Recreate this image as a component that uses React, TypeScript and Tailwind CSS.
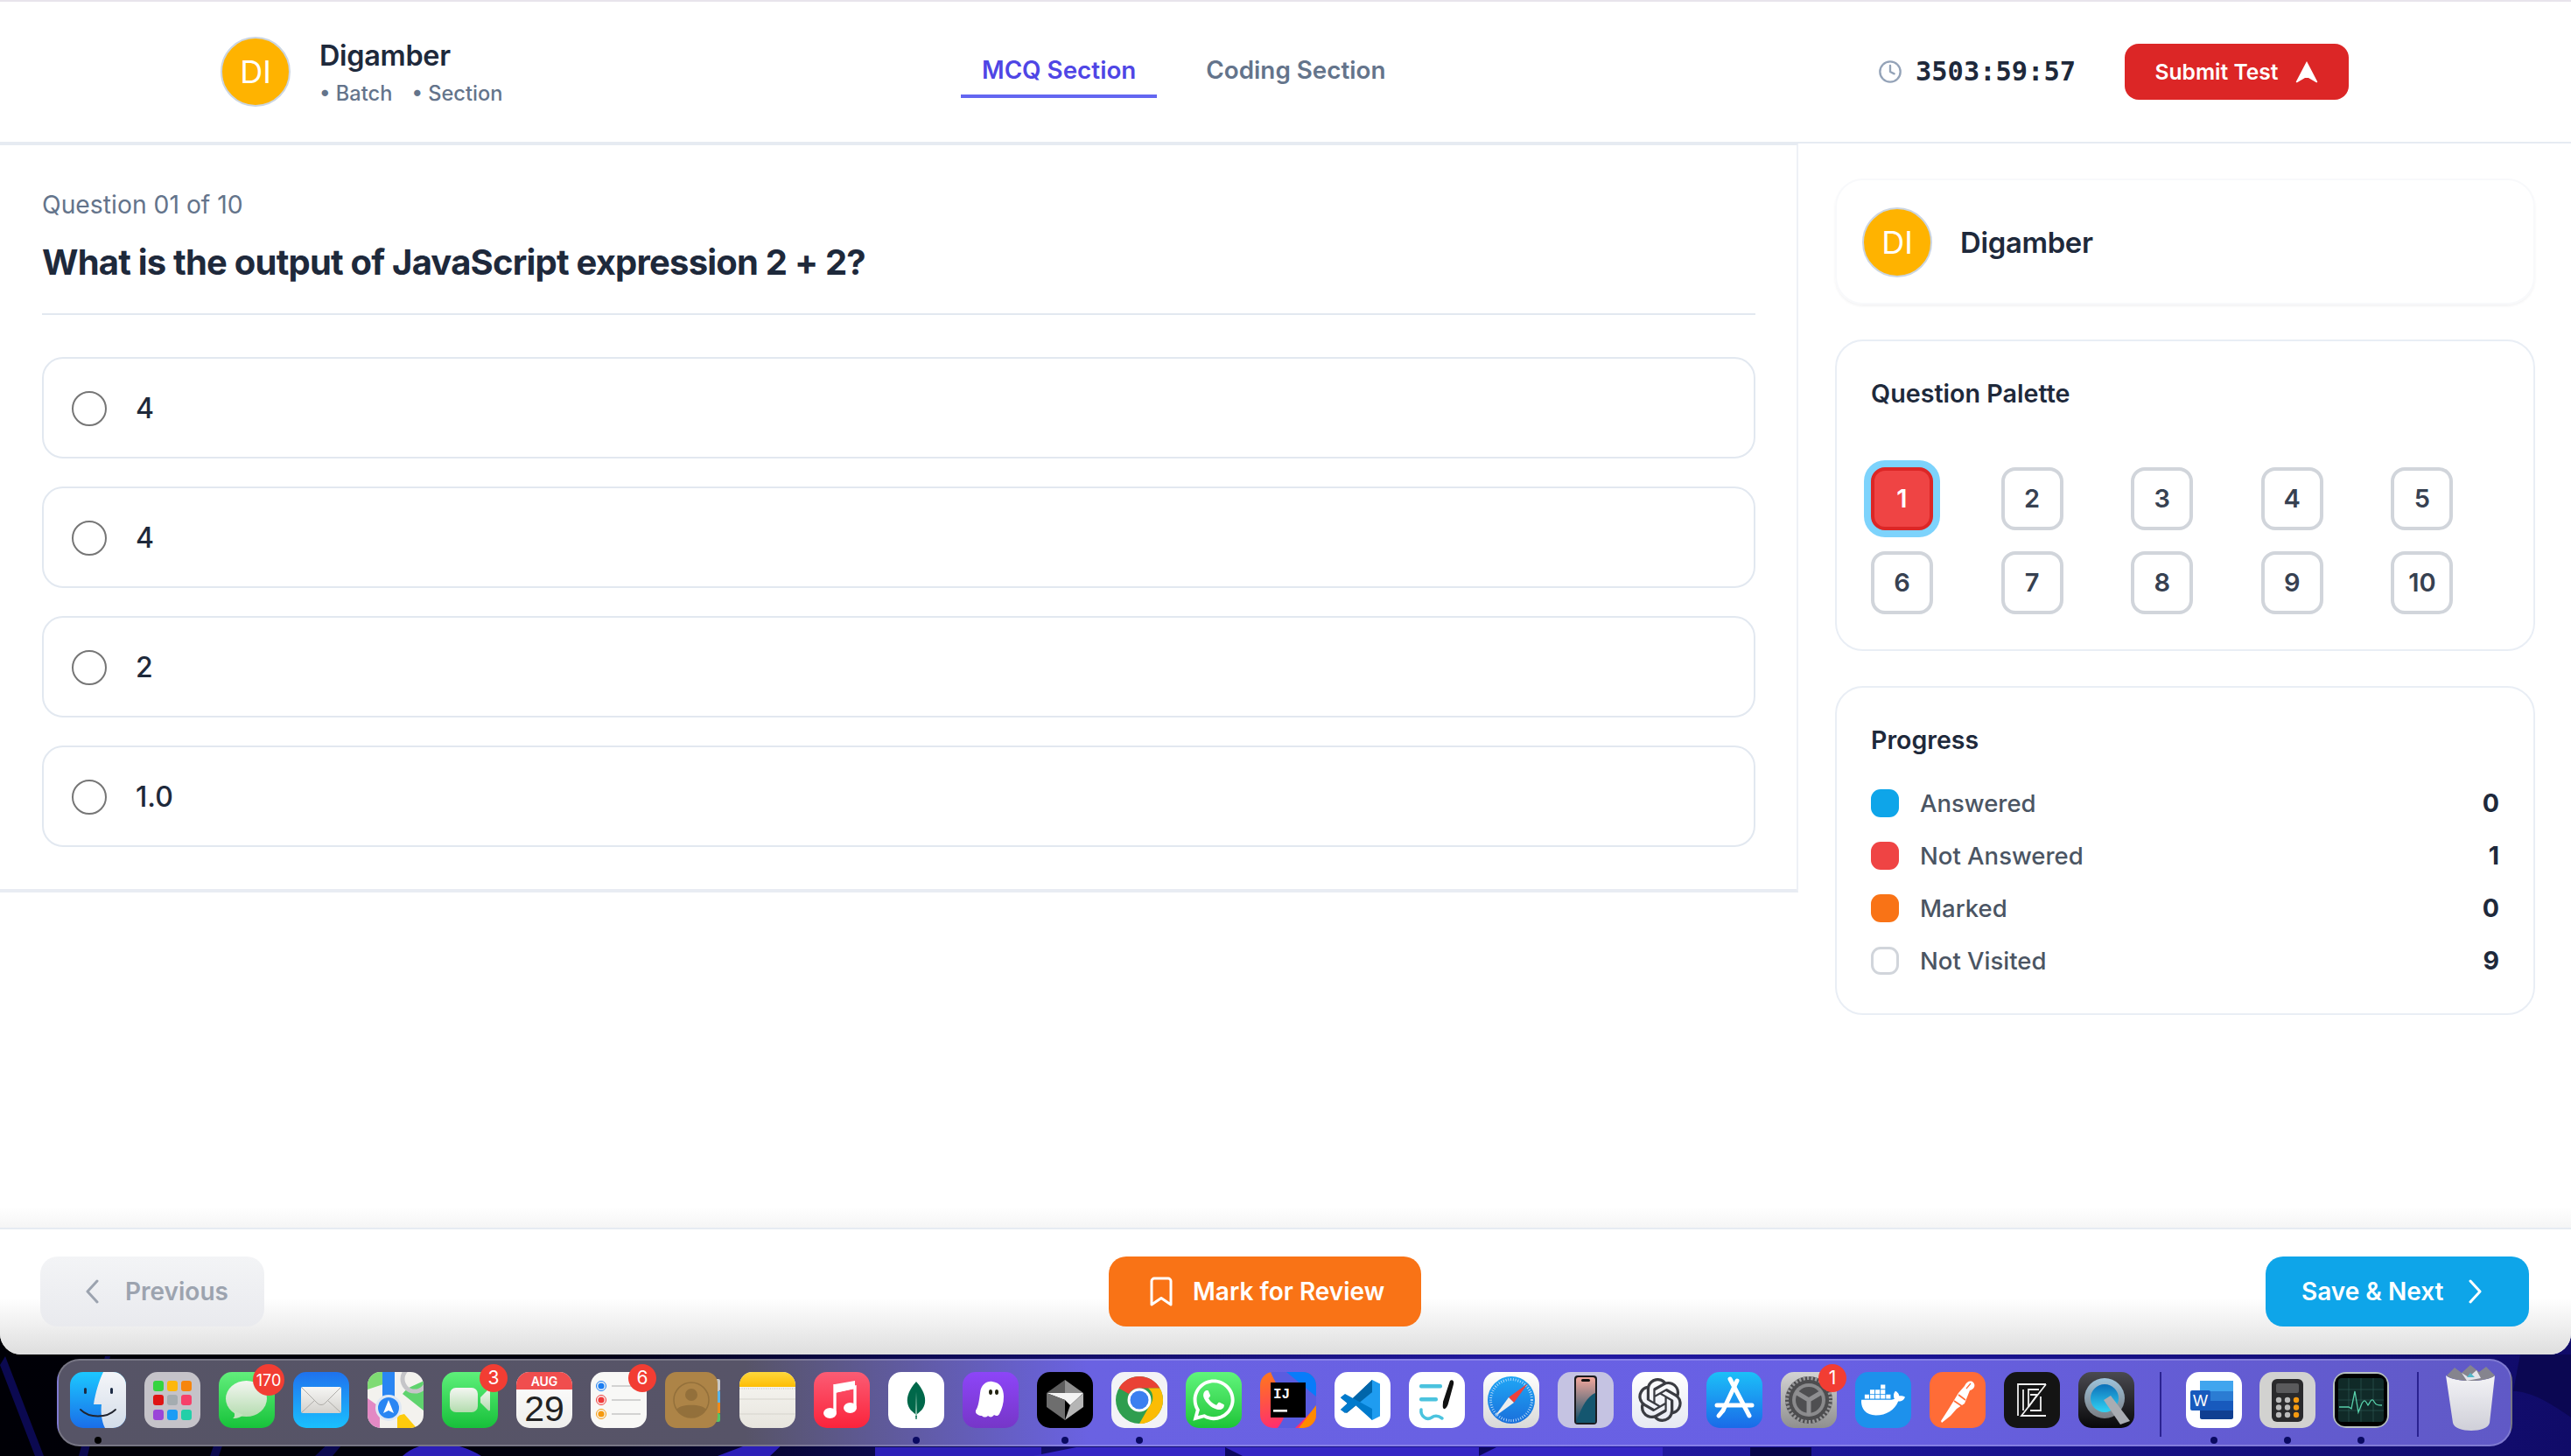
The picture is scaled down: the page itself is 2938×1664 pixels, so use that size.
import { ReactNode } from 'react'
import { Clock } from 'lucide-react'
import { FaWhatsapp, FaDocker } from 'react-icons/fa'
import { SiOpenai } from 'react-icons/si'

const options = ['4', '4', '2', '1.0']
const palette = [1, 2, 3, 4, 5, 6, 7, 8, 9, 10]
const progress = [
  { label: 'Answered', value: 0, swatch: 'bg-[#0ea5e9]' },
  { label: 'Not Answered', value: 1, swatch: 'bg-[#ef4444]' },
  { label: 'Marked', value: 0, swatch: 'bg-[#f97316]' },
  { label: 'Not Visited', value: 9, swatch: 'bg-white border-[3px] border-[#d1d5db]' },
]

function Avatar() {
  return (
    <div className="w-20 h-20 shrink-0 rounded-full bg-[#ffb300] border-2 border-[#cbd5e1] flex items-center justify-center text-white text-[36px] leading-none">
      DI
    </div>
  )
}

function Chevron({ dir }: { dir: 'left' | 'right' }) {
  return (
    <svg width="16" height="28" viewBox="0 0 16 28" fill="none" stroke="currentColor" strokeWidth="3" strokeLinecap="round" strokeLinejoin="round">
      <polyline points={dir === 'left' ? '14,2 3,14 14,26' : '2,2 13,14 2,26'} />
    </svg>
  )
}

/* Dock tiles: every icon is drawn on a 64 x 64 grid */
function Svg({ children }: { children: ReactNode }) {
  return (
    <svg width="64" height="64" viewBox="0 0 64 64" className="block">
      {children}
    </svg>
  )
}

function Grad({ id, from, to, x2 = 0, y2 = 1 }: { id: string; from: string; to: string; x2?: number; y2?: number }) {
  return (
    <defs>
      <linearGradient id={id} x1="0" y1="0" x2={x2} y2={y2}>
        <stop offset="0" stopColor={from} />
        <stop offset="1" stopColor={to} />
      </linearGradient>
    </defs>
  )
}

const Finder = () => (
  <Svg>
    <Grad id="f1" from="#1cc8ff" to="#1a6ee8" />
    <Grad id="f2" from="#f4f5f8" to="#d3dde9" />
    <rect width="64" height="64" fill="url(#f1)" />
    <path d="M38 0C33 10 29 24 27 37H36C35 46 36 56 40 64H64V0Z" fill="url(#f2)" />
    <rect x="16" y="18" width="3" height="7" rx="1.5" fill="#1d2b44" />
    <rect x="46" y="18" width="3" height="7" rx="1.5" fill="#1d2b44" />
    <path d="M12 43C22 53 42 53 52 43" fill="none" stroke="#20242e" strokeWidth="1.8" strokeLinecap="round" />
  </Svg>
)

const launchColors = ['#35d43f', '#fdb70c', '#f6850d', '#df1414', '#a4acb0', '#f6406a', '#9a45d8', '#1a9cf5', '#22cfa8']
const Launchpad = () => (
  <div className="w-16 h-16 bg-[#c5c3c9] grid grid-cols-[repeat(3,12px)] gap-x-[4px] gap-y-[4.5px] content-center justify-center">
    {launchColors.map((c) => (
      <div key={c} className="h-[12px] rounded-[3px]" style={{ background: c }} />
    ))}
  </div>
)

const Messages = () => (
  <Svg>
    <Grad id="m1" from="#62ee7c" to="#17c33a" />
    <Grad id="m2" from="#f3f6f1" to="#b5dcb0" />
    <rect width="64" height="64" fill="url(#m1)" />
    <ellipse cx="31.5" cy="30.5" rx="23.5" ry="20.5" fill="url(#m2)" />
    <path d="M17 44C19 49 18 52 16 53C20 53.5 25 52 28 49Z" fill="#c4e3bf" />
  </Svg>
)

const Mail = () => (
  <Svg>
    <Grad id="ma" from="#1f72ee" to="#1ac0fe" />
    <Grad id="mb" from="#f6f6f4" to="#d3d1cd" />
    <rect width="64" height="64" fill="url(#ma)" />
    <rect x="9" y="17" width="46" height="30" rx="2" fill="url(#mb)" />
    <path d="M10 18L28 36C30 38 34 38 36 36L54 18M10 46L25 32M54 46L39 32" fill="none" stroke="#aeaca8" strokeWidth="1" />
  </Svg>
)

const Maps = () => (
  <Svg>
    <rect width="64" height="64" fill="#f3f2ee" />
    <path d="M0 0H18V14L0 20Z" fill="#7fdb73" />
    <path d="M40 25L64 44V10C58 14 46 16 40 25Z" fill="#5fd36e" />
    <path d="M0 30L14 40V64H0Z" fill="#e389c4" />
    <path d="M34 64V50L42 48L56 64Z" fill="#fdcb0d" />
    <rect x="17" y="0" width="14" height="30" fill="#2a86f3" />
    <circle cx="54" cy="8" r="14" fill="none" stroke="#c5c5c8" strokeWidth="5" />
    <circle cx="24" cy="41" r="15" fill="#dfe8f4" />
    <circle cx="24" cy="41" r="12" fill="#2a86f3" />
    <path d="M24 32L30 47L24 44L18 47Z" fill="#fff" />
  </Svg>
)

const FaceTime = () => (
  <Svg>
    <Grad id="ft" from="#5ef07a" to="#17c03a" />
    <Grad id="ft2" from="#f4f6f2" to="#b3dcae" />
    <rect width="64" height="64" fill="url(#ft)" />
    <rect x="9" y="18" width="32" height="28" rx="7" fill="url(#ft2)" />
    <path d="M44 29L53 20C54 19 55 20 55 21V43C55 44 54 45 53 44L44 35Z" fill="url(#ft2)" />
  </Svg>
)

const Calendar = () => (
  <Svg>
    <Grad id="ca" from="#ffffff" to="#eeeeec" />
    <rect width="64" height="64" fill="url(#ca)" />
    <rect width="64" height="20" fill="#f04e4e" />
    <text x="32" y="16" textAnchor="middle" fontFamily="Inter, sans-serif" fontSize="14" fontWeight="600" fill="#fff">AUG</text>
    <text x="32" y="56" textAnchor="middle" fontFamily="'Liberation Sans', sans-serif" fontSize="41" fill="#222">29</text>
  </Svg>
)

const Reminders = () => (
  <Svg>
    <rect width="64" height="64" fill="#f8f8f6" />
    {[
      ['16', '#1c7ef2'],
      ['32', '#f03b3b'],
      ['48', '#f59a10'],
    ].map(([y, c]) => (
      <g key={y}>
        <circle cx="12" cy={y} r="5.5" fill="none" stroke={c} strokeWidth="1" />
        <circle cx="12" cy={y} r="3.6" fill={c} />
        <rect x="24" y={Number(y) - 0.8} width="33" height="1.6" fill="#c9c9c9" />
      </g>
    ))}
  </Svg>
)

const Contacts = () => (
  <Svg>
    <rect x="56" y="8" width="7" height="14" rx="2" fill="#c8c8c6" />
    <rect x="56" y="22" width="7" height="13" fill="#58b4ea" />
    <rect x="56" y="35" width="7" height="12" fill="#ee8a1c" />
    <rect x="56" y="47" width="7" height="10" rx="2" fill="#55c463" />
    <rect width="60" height="64" rx="13" fill="#ad8447" />
    <circle cx="30" cy="32" r="20" fill="none" stroke="#93703b" strokeWidth="1.5" />
    <circle cx="30" cy="26" r="7" fill="#93703b" />
    <path d="M13 43C17 36 43 36 47 43C43 49 37 52 30 52C23 52 17 49 13 43Z" fill="#93703b" />
  </Svg>
)

const Notes = () => (
  <Svg>
    <Grad id="no" from="#f8f7f3" to="#e7e5de" />
    <Grad id="no2" from="#ffd83c" to="#fdbd04" />
    <rect width="64" height="64" fill="url(#no)" />
    <rect width="64" height="17" fill="url(#no2)" />
    <line x1="0" y1="19" x2="64" y2="19" stroke="#bbb" strokeWidth="1" strokeDasharray="1 1.5" />
    <line x1="0" y1="31" x2="64" y2="31" stroke="#d5d3cc" strokeWidth="1" />
    <line x1="0" y1="48" x2="64" y2="48" stroke="#d5d3cc" strokeWidth="1" />
  </Svg>
)

const Music = () => (
  <Svg>
    <Grad id="mu" from="#fb5c74" to="#fb233b" />
    <rect width="64" height="64" fill="url(#mu)" />
    <path d="M24 22L47 17V40" fill="none" stroke="#fff" strokeWidth="3.4" />
    <path d="M24 14L47 10V19L24 24Z" fill="#fff" />
    <path d="M24 14V46" stroke="#fff" strokeWidth="3.4" />
    <ellipse cx="18.5" cy="47" rx="7.5" ry="6" fill="#fff" />
    <ellipse cx="41.5" cy="41" rx="7.5" ry="6" fill="#fff" />
  </Svg>
)

const Mongo = () => (
  <Svg>
    <rect width="64" height="64" fill="#fff" />
    <path d="M32 11C40 20 43 28 42 35C41 42 36 46 33 48L32.6 54H31.4L31 48C28 46 23 42 22 35C21 28 24 20 32 11Z" fill="#00684a" />
    <path d="M32 22L32.8 50H31.2Z" fill="#b9dccb" />
  </Svg>
)

const Ghost = () => (
  <Svg>
    <Grad id="gh" from="#8d45f8" to="#7636c8" />
    <rect width="64" height="64" fill="url(#gh)" />
    <path d="M15 44C18 40 19 32 20 24C21 14 28 10 34 11C43 12 47 19 47 28C47 36 45 42 42 48C40 51 38 50 36 49C34 52 31 52 29 50C27 52 24 52 22 50C19 50 14 48 15 44Z" fill="#fff" />
    <ellipse cx="32" cy="23" rx="2" ry="3" fill="#221" />
    <ellipse cx="39" cy="23" rx="2" ry="3" fill="#221" />
  </Svg>
)

const Crystal = () => (
  <Svg>
    <rect width="64" height="64" fill="#000" />
    <path d="M32 9L53 24L32 30Z" fill="#8f8f8f" />
    <path d="M32 9L11 24L32 30Z" fill="#5c5c5c" />
    <path d="M11 24L53 24L38 38L32 32Z" fill="#f3f3f3" />
    <path d="M53 24V40L32 55L38 38Z" fill="#b5b5b5" />
    <path d="M11 24V40L32 55L32 32Z" fill="#6e6e6e" />
  </Svg>
)

const Chrome = () => (
  <Svg>
    <rect width="64" height="64" fill="#f3f3f6" />
    <circle cx="32" cy="32" r="27" fill="#2f9e4f" />
    <path d="M32 5A27 27 0 0 1 55.4 18.5H32A13.5 13.5 0 0 0 20 25L8.6 18.5A27 27 0 0 1 32 5Z" fill="#e94235" />
    <path d="M55.4 18.5A27 27 0 0 1 32 59L44 38A13.5 13.5 0 0 0 42 18.5Z" fill="#fbbc04" />
    <circle cx="32" cy="32" r="13.5" fill="#fff" />
    <circle cx="32" cy="32" r="10.5" fill="#3b7ff0" />
  </Svg>
)

const WhatsApp = () => (
  <div className="w-16 h-16 bg-gradient-to-b from-[#5ff57b] to-[#1ac536] flex items-center justify-center text-white">
    <FaWhatsapp size={54} />
  </div>
)

const Idea = () => (
  <Svg>
    <Grad id="ij" from="#ff7a1a" to="#ff2d6f" x2={0.3} />
    <rect width="64" height="64" fill="url(#ij)" />
    <path d="M12 0H64V40L40 64H20C40 40 20 20 12 0Z" fill="#5a5ce0" />
    <path d="M30 0H64V28Z" fill="#087cfa" />
    <path d="M44 64L64 38V64Z" fill="#ff8a00" />
    <rect x="12" y="12" width="40" height="40" fill="#000" />
    <text x="15" y="30" fontFamily="'Liberation Mono', monospace" fontSize="16" fontWeight="700" fill="#fff">IJ</text>
    <rect x="15" y="43" width="16" height="2.6" fill="#fff" />
  </Svg>
)

const VsCode = () => (
  <Svg>
    <rect width="64" height="64" fill="#fff" />
    <path d="M43 9L52 13.5V50.5L43 55L24 34Z" fill="#1f9cf0" />
    <path d="M43 9L18 33L10 27L7 29.5L15 36L43 23Z" fill="#0065a9" />
    <path d="M7 43L43 9V23L14 47Z" fill="#0065a9" />
    <path d="M7 29L12 25L43 42V55L24 38L12 47L7 43L15 36Z" fill="#007acc" />
  </Svg>
)

const Freeform = () => (
  <Svg>
    <rect width="64" height="64" fill="#fff" />
    <rect x="12" y="14" width="26" height="4.5" rx="2" fill="#4bc3de" />
    <rect x="12" y="29" width="21" height="4.5" rx="2" fill="#4bc3de" />
    <path d="M14 43C13 50 20 56 26 52C30 49 34 50 38 53" fill="none" stroke="#4bc3de" strokeWidth="3.5" strokeLinecap="round" />
    <path d="M47 10C50 8 52 11 51 14L45 36C44 40 41 43 40 42C38 41 39 37 39 34Z" fill="#111" />
  </Svg>
)

const Safari = () => (
  <Svg>
    <Grad id="sa" from="#fff" to="#d8d8d8" />
    <Grad id="sb" from="#1fa6f5" to="#1a6fdb" />
    <rect width="64" height="64" fill="url(#sa)" />
    <circle cx="32" cy="32" r="27" fill="url(#sb)" />
    <circle cx="32" cy="32" r="23.5" fill="none" stroke="#cfe6fa" strokeWidth="3" strokeDasharray="0.8 2" />
    <path d="M51 13L35 35L29 29Z" fill="#f0413b" />
    <path d="M13 51L29 29L35 35Z" fill="#eeeeee" />
  </Svg>
)

const Mirroring = () => (
  <Svg>
    <Grad id="ip" from="#f4a79c" to="#0d4d68" />
    <rect width="64" height="64" fill="#c5c3e2" />
    <rect x="19" y="4" width="26" height="56" rx="4" fill="#1b1b1f" />
    <rect x="21" y="6" width="22" height="52" rx="3" fill="url(#ip)" />
    <path d="M43 24C34 28 28 38 21 58H43Z" fill="#14566f" />
    <rect x="27" y="8" width="10" height="3" rx="1.5" fill="#111" />
  </Svg>
)

const ChatGpt = () => (
  <div className="w-16 h-16 bg-gradient-to-b from-white to-[#e6e9f2] flex items-center justify-center text-[#3a3c42]">
    <SiOpenai size={50} />
  </div>
)

const AppStore = () => (
  <Svg>
    <Grad id="as" from="#1cc0f8" to="#1a6ae8" />
    <rect width="64" height="64" fill="url(#as)" />
    <g stroke="#fff" strokeWidth="5" strokeLinecap="round" fill="none">
      <path d="M35 10L19 44" />
      <path d="M27 8L49 50" />
      <path d="M12 38H52" />
      <path d="M14 50L19 44" />
    </g>
  </Svg>
)

const Settings = () => (
  <Svg>
    <Grad id="se" from="#d3d3d3" to="#8f8f8f" />
    <rect width="64" height="64" fill="url(#se)" />
    <circle cx="32" cy="32" r="27" fill="#4d4d4f" />
    <circle cx="32" cy="32" r="25" fill="none" stroke="#98989a" strokeWidth="4" strokeDasharray="2.4 2.2" />
    <circle cx="32" cy="32" r="19" fill="#8a8a8c" />
    <circle cx="32" cy="32" r="15" fill="#4f4f51" />
    <path d="M32 32V49M32 32L17 23M32 32L47 23" stroke="#8f8f91" strokeWidth="5" />
  </Svg>
)

const Docker = () => (
  <div className="w-16 h-16 bg-[#1d91ec] flex items-center justify-center text-white">
    <FaDocker size={50} />
  </div>
)

const Postman = () => (
  <Svg>
    <rect width="64" height="64" fill="#ff6c37" />
    <path d="M13 56L22 42L33 24L40 16C42 11 47 9 50 12C53 15 51 20 46 21L40 36L31 42L24 50L14 58Z" fill="#fff" />
    <path d="M28 33L37 39M33 26L41 32" stroke="#ff6c37" strokeWidth="1.6" />
    <path d="M42 19L47 13" stroke="#ff6c37" strokeWidth="1.2" />
  </Svg>
)

const Zed = () => (
  <Svg>
    <rect width="64" height="64" fill="#141414" />
    <g fill="none" stroke="#eee" strokeWidth="1.8">
      <path d="M48 14H16V50" />
      <path d="M48 14L20 50H48" />
      <path d="M22 20V44" />
      <path d="M40 20H28V40" />
      <path d="M42 28V44H30" />
      <path d="M30 26H38L28 40" />
    </g>
  </Svg>
)

const QuickTime = () => (
  <Svg>
    <Grad id="qt" from="#4a4a50" to="#08080a" />
    <Grad id="qb" from="#0d6fb8" to="#31d4f5" />
    <Grad id="qc" from="#9ec4dc" to="#7a7d82" />
    <rect width="64" height="64" fill="url(#qt)" />
    <circle cx="30" cy="30" r="23" fill="url(#qc)" />
    <circle cx="30" cy="30" r="16" fill="url(#qb)" />
    <path d="M29 32L37 27L59 56L48 60Z" fill="#a9acb2" />
  </Svg>
)

const Word = () => (
  <Svg>
    <rect width="64" height="64" fill="#fff" />
    <rect x="16" y="10" width="38" height="12" fill="#41a5ee" />
    <rect x="16" y="22" width="38" height="11" fill="#2b7cd3" />
    <rect x="16" y="33" width="38" height="11" fill="#185abd" />
    <path d="M16 44H54V52C54 53 53 54 52 54H18C17 54 16 53 16 52Z" fill="#103f91" />
    <rect x="5" y="21" width="23" height="23" rx="2" fill="#185abd" />
    <text x="16.5" y="39" textAnchor="middle" fontFamily="'Liberation Sans', sans-serif" fontSize="18" fill="#fff">W</text>
  </Svg>
)

const calcKeys = ['#bbb', '#bbb', '#f59a10', '#bbb', '#bbb', '#f59a10', '#bbb', '#bbb', '#f59a10']
const Calculator = () => (
  <Svg>
    <rect width="64" height="64" fill="#d2d2d0" />
    <rect x="14" y="8" width="36" height="49" rx="6" fill="#2a2a2c" />
    <rect x="19" y="13" width="26" height="11" rx="2" fill="#5a5a5c" />
    {calcKeys.map((c, i) => (
      <circle key={i} cx={22 + (i % 3) * 10} cy={32 + Math.floor(i / 3) * 8.5} r="3.2" fill={c} />
    ))}
  </Svg>
)

const Activity = () => (
  <Svg>
    <rect width="64" height="64" fill="#b8c2c0" />
    <rect x="2" y="2" width="60" height="60" rx="12" fill="#000" />
    <rect x="6" y="7" width="52" height="50" rx="4" fill="#102a28" />
    <g stroke="#2d5652" strokeWidth="0.7">
      <path d="M6 20H58M6 32H58M6 44H58M18 7V57M32 7V57M46 7V57" />
    </g>
    <path d="M7 40H18L21 42L25 22L29 46L33 36C36 30 38 34 40 38C42 36 44 28 47 34C49 38 52 38 56 38" fill="none" stroke="#57cfa9" strokeWidth="1.3" />
  </Svg>
)

const Trash = () => (
  <svg width="64" height="76" viewBox="0 0 64 76" className="block -mt-2">
    <Grad id="tr" from="#f3f3f6" to="#cfcfd8" />
    <path d="M4 12C14 20 50 20 60 12L54 66C52 78 14 78 12 66Z" fill="url(#tr)" />
    <path d="M5 12L14 3L22 9L32 0L42 8L50 2L60 12C50 20 14 20 5 12Z" fill="#85848e" />
    <path d="M22 9L30 14L39 6L44 15L28 18Z" fill="#e4e4ea" />
    <path d="M32 9L37 14H28Z" fill="#53b8c9" />
  </svg>
)

interface DockApp {
  icon: ReactNode
  bare?: boolean
  badge?: string
  running?: boolean
}

const dockMain: DockApp[] = [
  { icon: <Finder />, running: true },
  { icon: <Launchpad /> },
  { icon: <Messages />, badge: '170' },
  { icon: <Mail /> },
  { icon: <Maps /> },
  { icon: <FaceTime />, badge: '3' },
  { icon: <Calendar /> },
  { icon: <Reminders />, badge: '6' },
  { icon: <Contacts />, bare: true },
  { icon: <Notes /> },
  { icon: <Music /> },
  { icon: <Mongo />, running: true },
  { icon: <Ghost /> },
  { icon: <Crystal />, running: true },
  { icon: <Chrome />, running: true },
  { icon: <WhatsApp /> },
  { icon: <Idea /> },
  { icon: <VsCode /> },
  { icon: <Freeform /> },
  { icon: <Safari /> },
  { icon: <Mirroring /> },
  { icon: <ChatGpt /> },
  { icon: <AppStore /> },
  { icon: <Settings />, badge: '1' },
  { icon: <Docker /> },
  { icon: <Postman /> },
  { icon: <Zed /> },
  { icon: <QuickTime /> },
]

const dockRecent: DockApp[] = [
  { icon: <Word />, running: true },
  { icon: <Calculator />, running: true },
  { icon: <Activity />, running: true },
]

function DockItem({ app, dark }: { app: DockApp; dark?: boolean }) {
  return (
    <div className="relative w-16 h-16 shrink-0">
      <div className={app.bare ? 'w-16 h-16' : 'w-16 h-16 rounded-[15px] overflow-hidden'}>{app.icon}</div>
      {app.badge && (
        <span className={`absolute top-[-9px] right-[-11px] h-8 rounded-full bg-[#f23d33] text-white flex items-center justify-center ${app.badge.length > 1 ? 'w-9 h-9 text-[18px]' : 'w-8 text-[21px]'}`}>
          {app.badge}
        </span>
      )}
      {app.running && (
        <span className={`absolute left-[28px] top-[74px] w-2 h-2 rounded-full ${dark ? 'bg-black' : 'bg-[#0a0a62]'}`} />
      )}
    </div>
  )
}

function Wallpaper() {
  return (
    <svg className="absolute inset-0" width="2938" height="1664" viewBox="0 0 2938 1664">
      <defs>
        <linearGradient id="wp" x1="0" y1="0" x2="1" y2="0">
          <stop offset="0" stopColor="#000006" />
          <stop offset="0.22" stopColor="#00000e" />
          <stop offset="0.36" stopColor="#0d0a55" />
          <stop offset="0.6" stopColor="#231aa2" />
          <stop offset="0.75" stopColor="#1a1492" />
          <stop offset="1" stopColor="#100b68" />
        </linearGradient>
      </defs>
      <rect width="2938" height="1664" fill="url(#wp)" />
      <path d="M0 1560L40 1664H50L6 1550ZM90 1664L120 1550H126L100 1664ZM240 1664L262 1600H272L250 1664ZM360 1664L385 1640H400L380 1664Z" fill="#0b0950" />
      <path d="M460 1664C480 1645 520 1645 550 1664ZM820 1664L870 1645H900L880 1664ZM1000 1664V1654H1190V1664Z" fill="#2c1fb8" />
      <path d="M1180 1664L1230 1654H1900V1664ZM1240 1654H1260L1250 1664H1230Z" fill="#3426c4" />
      <path d="M1400 1654L1420 1664H1400ZM1690 1654H1710L1690 1664Z" fill="#0c0860" />
      <path d="M2000 1654H2070V1664H2000Z" fill="#07054a" />
      <path d="M2880 1548H2938V1620C2910 1600 2890 1590 2872 1590Z" fill="#0b0752" />
    </svg>
  )
}

export default function App() {
  return (
    <div className="relative h-[1664px] w-[2938px] overflow-hidden font-['Inter',sans-serif]">
      <Wallpaper />

      {/* Test window */}
      <div className="relative h-[1548px] bg-white rounded-b-[24px] overflow-hidden flex flex-col">
        <header className="h-[164px] shrink-0 border-t-2 border-t-[#e8e4ec] border-b-2 border-b-[#e6ebf2] pl-[252px] pr-[254px] flex items-center">
          <div className="w-[846px] flex items-center gap-[33px]">
            <Avatar />
            <div className="pt-[2px]">
              <div className="text-[32.4px] leading-[40px] font-semibold text-[#1e293b] tracking-[-0.3px]">Digamber</div>
              <div className="mt-[7px] flex gap-[22px] text-[23.6px] leading-[32px] font-medium text-[#64748b]">
                <span>• Batch</span>
                <span>• Section</span>
              </div>
            </div>
          </div>

          <nav className="flex-1 flex gap-[32px]">
            <button className="h-[60px] px-[24px] pt-[2px] border-b-4 border-[#6366f1] text-[27.8px] font-semibold text-[#4f46e5]">MCQ Section</button>
            <button className="h-[60px] px-[24px] pt-[2px] border-b-4 border-transparent text-[27.8px] font-semibold text-[#64748b]">Coding Section</button>
          </nav>

          <div className="flex items-center">
            <Clock size={28} className="text-[#94a3b8]" />
            <span className="ml-[15px] font-['DejaVu_Sans_Mono',monospace] font-bold text-[30.4px] text-[#1e293b]">3503:59:57</span>
            <button className="ml-[56px] w-[256px] h-16 rounded-2xl bg-[#dc2626] text-white text-[24.6px] font-semibold flex items-center justify-center gap-[20px]">
              Submit Test
              <svg width="26" height="26" viewBox="0 0 26 26" fill="#fff">
                <path d="M13 1L25 24C25.5 25 25 25.5 24 25.3L15 20H11L2 25.3C1 25.5 0.5 25 1 24Z" />
              </svg>
            </button>
          </div>
        </header>

        <main className="flex-1 flex bg-[linear-gradient(to_bottom,#fff_calc(100%-24px),#f5f5f5_100%)]">
          {/* Question */}
          <section className="w-[2055px] self-start shrink-0 bg-white border-t-2 border-r-2 border-b-4 border-t-[#e6ebf2] border-r-[#eef1f6] border-b-[#e8ecf3] p-12 pr-[47px]">
            <p className="text-[28.3px] leading-[40px] text-[#64748b]">Question 01 of 10</p>
            <h1 className="mt-[18px] pb-[30px] text-[40px] leading-[56px] font-bold text-[#1e293b] tracking-[-0.8px] border-b-2 border-[#e2e8f0] box-content">
              What is the output of JavaScript expression 2 + 2?
            </h1>
            <div className="mt-12 flex flex-col gap-[32px]">
              {options.map((opt, i) => (
                <label key={i} className="h-[116px] flex items-center gap-[33px] px-[32px] pt-[1px] rounded-[24px] border-2 border-[#e2e8f0]">
                  <span className="w-10 h-10 rounded-full border-2 border-[#767676] shrink-0" />
                  <span className="text-[32px] font-medium text-[#1e293b]">{opt}</span>
                </label>
              ))}
            </div>
          </section>

          {/* Sidebar */}
          <aside className="w-[800px] ml-[42px] pt-10 flex flex-col gap-10">
            <div className="h-[144px] rounded-[32px] border-2 border-[#f8f9fb] shadow-[0_2px_3px_rgba(15,23,42,0.05)] pl-[29px] pt-[2px] flex items-center gap-[32px]">
              <Avatar />
              <span className="text-[32.8px] pt-[2px] font-semibold text-[#1e293b] tracking-[-0.3px]">Digamber</span>
            </div>

            <div className="h-[356px] rounded-[32px] border-2 border-[#e9eef5] pl-[39px] pr-[39px] pt-[40px]">
              <h2 className="text-[28.7px] leading-[40px] font-semibold text-[#1e293b]">Question Palette</h2>
              <div className="mt-[64px] grid grid-cols-[repeat(5,148.6px)] gap-y-[24px]">
                {palette.map((n) => (
                  <button
                    key={n}
                    className={
                      n === 1
                        ? 'w-[71px] h-[72px] rounded-[16px] border-4 border-[#dc2626] bg-[#ef4444] text-white text-[29px] font-semibold shadow-[0_0_0_8px_#7dd3fc]'
                        : 'w-[71px] h-[72px] rounded-[16px] border-4 border-[#d1d5db] bg-white text-[#374151] text-[29px] font-semibold'
                    }
                  >
                    {n}
                  </button>
                ))}
              </div>
            </div>

            <div className="h-[376px] rounded-[32px] border-2 border-[#e9eef5] pl-[39px] pr-[39px] pt-[40px]">
              <h2 className="text-[28.5px] leading-[40px] font-semibold text-[#1e293b]">Progress</h2>
              <div className="mt-[36px] flex flex-col gap-[28px]">
                {progress.map((row) => (
                  <div key={row.label} className="h-8 flex items-center">
                    <span className={`w-8 h-8 rounded-[11px] ${row.swatch}`} />
                    <span className="ml-[24px] pt-[1px] flex-1 text-[27.5px] font-medium text-[#4b5563]">{row.label}</span>
                    <span className="pt-[1px] text-[28.5px] font-bold text-[#1e293b]">{row.value}</span>
                  </div>
                ))}
              </div>
            </div>
          </aside>
        </main>

        <footer className="h-[145px] shrink-0 border-t-2 border-[#e6ebf2] pl-[46px] pr-[48px] pt-[31px] flex justify-between items-start bg-[linear-gradient(to_bottom,#fff_55%,#dedede_100%)]">
          <button className="w-[256px] h-20 pl-[51px] rounded-[20px] bg-gradient-to-b from-[#f3f4f6] to-[#e9eaee] text-[#9ca3af] text-[28px] font-semibold flex items-center gap-[30px]">
            <Chevron dir="left" />
            Previous
          </button>
          <button className="w-[357px] h-20 pl-[47px] rounded-[20px] bg-[#f97316] text-white text-[28px] font-semibold flex items-center gap-[23px]">
            <svg width="26" height="34" viewBox="0 0 26 34" fill="none" stroke="#fff" strokeWidth="3" strokeLinejoin="round">
              <path d="M5 2H21C22.5 2 24 3.5 24 5V32L13 24.5L2 32V5C2 3.5 3.5 2 5 2Z" />
            </svg>
            Mark for Review
          </button>
          <button className="w-[301px] h-20 pl-[41px] rounded-[20px] bg-[#0ea5e9] text-white text-[28px] font-semibold flex items-center gap-[29px]">
            Save &amp; Next
            <Chevron dir="right" />
          </button>
        </footer>
      </div>

      {/* Dock */}
      <div className="relative mt-[5px] ml-[65px] w-[2806px] h-[100px] rounded-[26px] border-2 border-white/20 bg-[linear-gradient(to_right,#565466_0%,#575468_28%,#6a62e2_42%,#6860e4_72%,#6059c6_100%)] pl-[13px] pt-[13px] flex items-start">
        <div className="flex gap-[21px]">
          {dockMain.map((app, i) => (
            <DockItem key={i} app={app} dark={i === 0} />
          ))}
        </div>
        <div className="w-[2px] h-[74px] bg-[#2a2290] ml-[29px] mr-[28px] shrink-0" />
        <div className="flex gap-[20px]">
          {dockRecent.map((app, i) => (
            <DockItem key={i} app={app} />
          ))}
        </div>
        <div className="w-[2px] h-[74px] bg-[#2a2290] ml-[32px] mr-[27px] shrink-0" />
        <DockItem app={{ icon: <Trash />, bare: true }} />
      </div>
    </div>
  )
}
